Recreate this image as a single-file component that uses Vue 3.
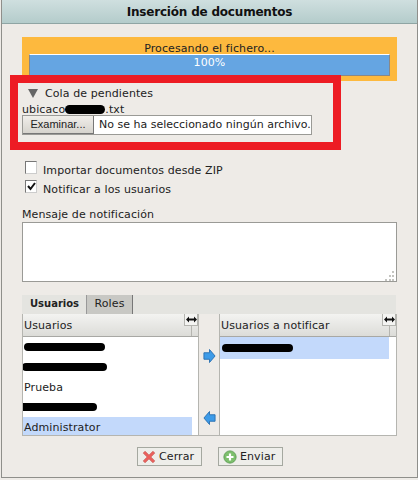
<template>
  <div class="dialog">
    <div class="title">Inserción de documentos</div>

    <div class="body">
      <div class="progress-box">
        <div class="progress-label">Procesando el fichero...</div>
        <div class="progress-bar">100%</div>
      </div>

      <div class="queue">
        <span class="triangle"></span>
        <span>Cola de pendientes</span>
      </div>
      <div class="file-name">ubicaco<span class="blob-inline"></span>.txt</div>
      <div class="file-input">
        <span class="file-btn">Examinar...</span>
        <span class="file-text">No se ha seleccionado ningún archivo.</span>
      </div>

      <div class="check-row first">
        <span class="check"></span>
        <span>Importar documentos desde ZIP</span>
      </div>
      <div class="check-row">
        <span class="check">
          <svg width="11" height="11" viewBox="0 0 11 11">
            <path d="M2 5 L4.500 8 L9 2" fill="none" stroke="#111" stroke-width="2" />
          </svg>
        </span>
        <span>Notificar a los usuarios</span>
      </div>

      <div class="msg-label">Mensaje de notificación</div>
      <div class="msg-box">
        <svg class="grip" width="11" height="11" viewBox="0 0 11 11">
          <path d="M8 1h2v2H8zM5 5h2v2H5zM8 5h2v2H8zM1 9h2v2H1zM5 9h2v2H5zM8 9h2v2H8z" fill="#c4c4c0" />
        </svg>
      </div>

      <div class="tabs">
        <span class="tab active">Usuarios</span>
        <span class="tab">Roles</span>
      </div>

      <div class="lists">
        <div class="list left">
          <div class="list-head">
            <span>Usuarios</span>
            <span class="resize">
              <svg width="11" height="7" viewBox="0 0 11 7">
                <path d="M0 3.500 3 .5v2h5v-2l3 3-3 3v-2H3v2z" fill="#111" />
              </svg>
            </span>
          </div>
          <div v-for="row in users" :key="row.id" class="row" :class="{ selected: row.selected }">
            <span v-if="row.name">{{ row.name }}</span>
            <span v-else class="blob" :style="{ width: row.w + 'px', marginLeft: row.x + 'px' }"></span>
          </div>
        </div>

        <div class="arrows">
          <svg width="13" height="16" viewBox="0 0 14 16">
            <path d="M1 4.500h6V1l6 7-6 7v-3.500H1z" fill="#3d9be8" stroke="#2a6fb0" />
          </svg>
          <svg width="13" height="16" viewBox="0 0 14 16">
            <path d="M13 4.500H7V1L1 8l6 7v-3.500h6z" fill="#3d9be8" stroke="#2a6fb0" />
          </svg>
        </div>

        <div class="list right">
          <div class="list-head">
            <span>Usuarios a notificar</span>
            <span class="resize">
              <svg width="11" height="7" viewBox="0 0 11 7">
                <path d="M0 3.500 3 .5v2h5v-2l3 3-3 3v-2H3v2z" fill="#111" />
              </svg>
            </span>
          </div>
          <div class="row selected tall">
            <span class="blob" :style="{ width: '71px', marginLeft: '1px' }"></span>
          </div>
        </div>
      </div>

      <div class="actions">
        <button class="btn">
          <svg width="14" height="14" viewBox="0 0 16 16">
            <path d="M1.500 3.500 3.500 1.500 8 6l4.500-4.500 2 2L10 8l4.500 4.500-2 2L8 10l-4.500 4.500-2-2L6 8z" fill="#ee5f5b" stroke="#c9605c" />
          </svg>
          Cerrar
        </button>
        <button class="btn">
          <svg width="14" height="14" viewBox="0 0 16 16">
            <circle cx="8" cy="8" r="7" fill="#7cbf6c" stroke="#5c9c52" />
            <path d="M8 4v8M4 8h8" stroke="#fff" stroke-width="2.500" />
          </svg>
          Enviar
        </button>
      </div>
    </div>

    <div class="red-mark"></div>
  </div>
</template>

<script setup>
const users = [
  { id: 1, w: 81, x: 0 },
  { id: 2, w: 85, x: -2 },
  { id: 3, name: 'Prueba' },
  { id: 4, w: 77, x: -4 },
  { id: 5, name: 'Administrator', selected: true }
]
</script>

<style>
html,
body {
  margin: 0;
  background: #eeebe7;
}
</style>

<style scoped>
.dialog {
  position: relative;
  box-sizing: border-box;
  width: 417px;
  height: 478px;
  margin-left: 1px;
  border: 1px solid #8f8f8b;
  border-top: 0;
  background: #eeebe7;
  font-family: "DejaVu Sans", Verdana, sans-serif;
  font-size: 11px;
  letter-spacing: 0.1px;
  color: #222;
}

.title {
  height: 23px;
  line-height: 24px;
  text-align: center;
  font-size: 12px;
  font-weight: bold;
  letter-spacing: -0.2px;
  color: #111;
  background: linear-gradient(#cfdfdf, #b4cccb);
  border-bottom: 1px solid #8fa5a4;
}

.body {
  padding: 13px 19px 0 20px;
}

.progress-box {
  box-sizing: border-box;
  width: 375px;
  height: 44px;
  padding: 5px 7px 0;
  background: #fdb93e;
  text-align: center;
}

.progress-label {
  height: 12px;
  line-height: 14px;
}

.progress-bar {
  box-sizing: border-box;
  height: 22px;
  line-height: 16px;
  border: 1px solid #888;
  border-top-color: #fff;
  background: #65a5e2;
  color: #fff;
}

.queue {
  display: flex;
  align-items: center;
  gap: 7px;
  height: 14px;
  margin-top: 5px;
  padding-left: 6px;
}

.triangle {
  width: 0;
  height: 0;
  border-left: 5.5px solid transparent;
  border-right: 5.5px solid transparent;
  border-top: 9px solid #666;
}

.file-name {
  height: 12px;
  line-height: 14px;
  margin-top: 3px;
}

.blob-inline {
  display: inline-block;
  width: 40px;
  height: 9px;
  border-radius: 5px;
  background: #000;
  vertical-align: -1px;
}

.file-input {
  display: flex;
  box-sizing: border-box;
  width: 290px;
  height: 20px;
  border: 1px solid #9a9a96;
  background: #fff;
}

.file-btn {
  box-sizing: border-box;
  width: 71px;
  line-height: 17px;
  text-align: center;
  font-family: "Liberation Sans", Arial, sans-serif;
  letter-spacing: 0;
  background: linear-gradient(#f0eeea, #d6d3cd);
  border-right: 1px solid #777;
  border-bottom: 1px solid #777;
}

.file-text {
  padding-left: 5px;
  line-height: 18px;
  white-space: nowrap;
  letter-spacing: 0;
}

.check-row {
  display: flex;
  align-items: center;
  gap: 6px;
  height: 14px;
  margin-top: 5px;
  padding-left: 3px;
}

.check-row.first {
  margin-top: 28px;
}

.check {
  box-sizing: border-box;
  display: block;
  width: 12px;
  height: 13px;
  margin-top: -6px;
  border: 1px solid #777;
  border-right-color: #ccc;
  border-bottom-color: #ccc;
  background: #fff;
}

.check svg {
  display: block;
}

.msg-label {
  height: 13px;
  line-height: 13px;
  margin-top: 12px;
}

.msg-box {
  position: relative;
  box-sizing: border-box;
  width: 375px;
  height: 60px;
  margin-top: 1px;
  border: 1px solid #9a9a96;
  background: #fff;
}

.grip {
  position: absolute;
  right: 1px;
  bottom: 0;
}

.tabs {
  display: flex;
  box-sizing: border-box;
  width: 374px;
  height: 19px;
  margin-top: 13px;
  background: #e4e4e0;
  padding-left: 1px;
}

.tab {
  box-sizing: border-box;
  width: 46px;
  line-height: 18px;
  text-align: center;
  background: #c8c8c4;
  border-right: 1px solid #777;
}

.tab.active {
  width: 64px;
  background: #e4e4e0;
  font-size: 10px;
  font-weight: bold;
  letter-spacing: 0;
  border-right: 1px solid #999;
}

.lists {
  display: flex;
  box-sizing: border-box;
  width: 375px;
  height: 122px;
  border-bottom: 1px solid #b5b5b0;
  border-left: 1px solid #b5b5b0;
  border-right: 1px solid #b5b5b0;
}

.list {
  overflow: hidden;
  background: #fff;
}

.list.left {
  width: 175px;
  border-right: 1px solid #b5b5b0;
}

.list.right {
  width: 176px;
  border-left: 1px solid #b5b5b0;
}

.list-head {
  position: relative;
  box-sizing: border-box;
  height: 23px;
  padding-left: 1px;
  line-height: 24px;
  background: linear-gradient(#f3f3f1, #dcdcd8);
  border-bottom: 1px solid #a8a8a4;
}

.list-head::after {
  content: "";
  position: absolute;
  top: 12px;
  right: 6px;
  bottom: 0;
  width: 1px;
  background: #b5b5b0;
}

.resize {
  position: absolute;
  top: 0;
  right: 0;
  display: flex;
  align-items: center;
  justify-content: center;
  box-sizing: border-box;
  width: 14px;
  height: 12px;
  border: 1px solid #b5b5b0;
  border-top: 0;
  background: #f4f4f2;
}

.row {
  display: flex;
  align-items: center;
  width: 169px;
  height: 20px;
  padding-left: 1px;
  box-sizing: border-box;
}

.row.selected {
  background: #c3d9fb;
}

.row.tall {
  height: 22px;
}

.blob {
  display: block;
  height: 8px;
  border-radius: 4px;
  background: #000;
}

.arrows {
  display: flex;
  flex-direction: column;
  align-items: center;
  gap: 46px;
  width: 20px;
  padding-top: 34px;
}

.actions {
  display: flex;
  gap: 16px;
  margin-top: 11px;
  padding-left: 115px;
}

.btn {
  display: flex;
  align-items: center;
  gap: 3px;
  box-sizing: border-box;
  width: 65px;
  height: 19px;
  padding: 0 0 0 4px;
  border: 1px solid #a5a8a0;
  background: #eeeeea;
  font: inherit;
  letter-spacing: 0.1px;
  color: #222;
}

.red-mark {
  position: absolute;
  left: 8px;
  top: 75px;
  box-sizing: border-box;
  width: 331px;
  height: 75px;
  border: 8px solid #ed1c24;
}
</style>
